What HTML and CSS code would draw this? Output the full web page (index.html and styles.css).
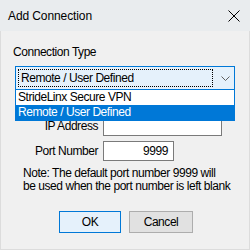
FILE: index.html
```html
<!DOCTYPE html>
<html>
<head>
<meta charset="utf-8">
<link rel="stylesheet" href="styles.css">
</head>
<body>
<div class="window">
  <div class="titlebar">
    <span class="title">Add Connection</span>
    <svg class="close" width="12" height="12" viewBox="0 0 12 12"><path d="M0.5 0.5 L11.5 11.5 M11.5 0.5 L0.5 11.5" stroke="#000" stroke-width="1" fill="none"/></svg>
  </div>
  <div class="content">
    <div class="group-label">Connection Type</div>
    <div class="combo-wrap">
      <div class="combo">
        <span class="combo-focus">Remote / User Defined</span>
        <svg class="chev" width="9" height="5" viewBox="0 0 9 5"><path d="M0.5 0.5 L4.5 4.5 L8.5 0.5" stroke="#606060" stroke-width="1" fill="none"/></svg>
      </div>
      <ul class="dropdown">
        <li class="opt">StrideLinx Secure VPN</li>
        <li class="opt sel">Remote / User Defined</li>
      </ul>
    </div>
    <div class="form">
      <label class="lbl">IP Address</label>
      <div class="input ip"></div>
      <label class="lbl">Port Number</label>
      <div class="input port">9999</div>
    </div>
    <p class="note">Note: The default port number 9999 will<br>be used when the port number is left blank</p>
    <div class="buttons">
      <button class="btn ok">OK</button>
      <button class="btn cancel">Cancel</button>
    </div>
  </div>
</div>
</body>
</html>
```
FILE: styles.css
```css
html, body {
  margin: 0;
  padding: 0;
}
body {
  width: 250px;
  height: 250px;
  font-family: "Liberation Sans", Arial, sans-serif;
  font-size: 12px;
  color: #000;
  overflow: hidden;
}
.window {
  box-sizing: border-box;
  width: 250px;
  height: 250px;
  background: #f0f0f0;
  border: 1px solid #dcdcdc;
  border-top: none;
  display: flex;
  flex-direction: column;
}
.titlebar {
  height: 31px;
  background: #e9ecee;
  display: flex;
  align-items: center;
  justify-content: space-between;
  padding: 0 10px 0 8px;
  margin: 0 -1px;
}
.title {
  font-size: 12px;
  letter-spacing: -0.1px;
}
.close {
  display: block;
}
.content {
  display: flex;
  flex-direction: column;
  letter-spacing: -0.45px;
}
.group-label {
  margin: 14px 0 0 12px;
  line-height: 15px;
}
.combo-wrap {
  position: relative;
  margin: 6px 14px 0 14px;
}
.combo {
  box-sizing: border-box;
  height: 24px;
  border: 1px solid #0078d7;
  background: #e5f1fb;
  display: flex;
  align-items: center;
  justify-content: space-between;
  padding: 0 4px 0 2px;
}
.combo-focus {
  box-sizing: border-box;
  flex: 1;
  height: 18px;
  line-height: 16px;
  border: 1px dotted #000;
  padding-left: 2px;
  margin-right: 8px;
}
.chev {
  display: block;
}
.dropdown {
  position: absolute;
  left: 0;
  right: 0;
  top: 24px;
  margin: 0;
  padding: 0;
  list-style: none;
  background: #fff;
  border: 1px solid #0078d7;
  border-top: none;
}
.opt {
  height: 15px;
  line-height: 15px;
  padding-left: 2px;
}
.opt.sel {
  background: #0078d7;
  color: #fff;
}
.form {
  display: grid;
  grid-template-columns: 97px auto;
  column-gap: 5px;
  row-gap: 5px;
  margin-top: 26px;
  justify-items: start;
  align-items: center;
}
.lbl {
  justify-self: end;
}
.input {
  box-sizing: border-box;
  height: 20px;
  background: #fff;
  border: 1px solid #7a7a7a;
  line-height: 18px;
  text-align: right;
  padding-right: 5px;
}
.ip { width: 119px; }
.port { width: 71px; }
.note {
  margin: 6px 0 0 22px;
  line-height: 13px;
  white-space: nowrap;
}
.buttons {
  display: flex;
  gap: 8px;
  margin: 18px 0 0 58px;
}
.btn {
  box-sizing: border-box;
  height: 22px;
  font-family: inherit;
  font-size: 12px;
  letter-spacing: inherit;
  color: #000;
  padding: 0;
  border: 1px solid #adadad;
  background: #e1e1e1;
}
.btn.ok {
  width: 62px;
  border-color: #0078d7;
  background: #e5f1fb;
}
.btn.cancel {
  width: 64px;
}
```
